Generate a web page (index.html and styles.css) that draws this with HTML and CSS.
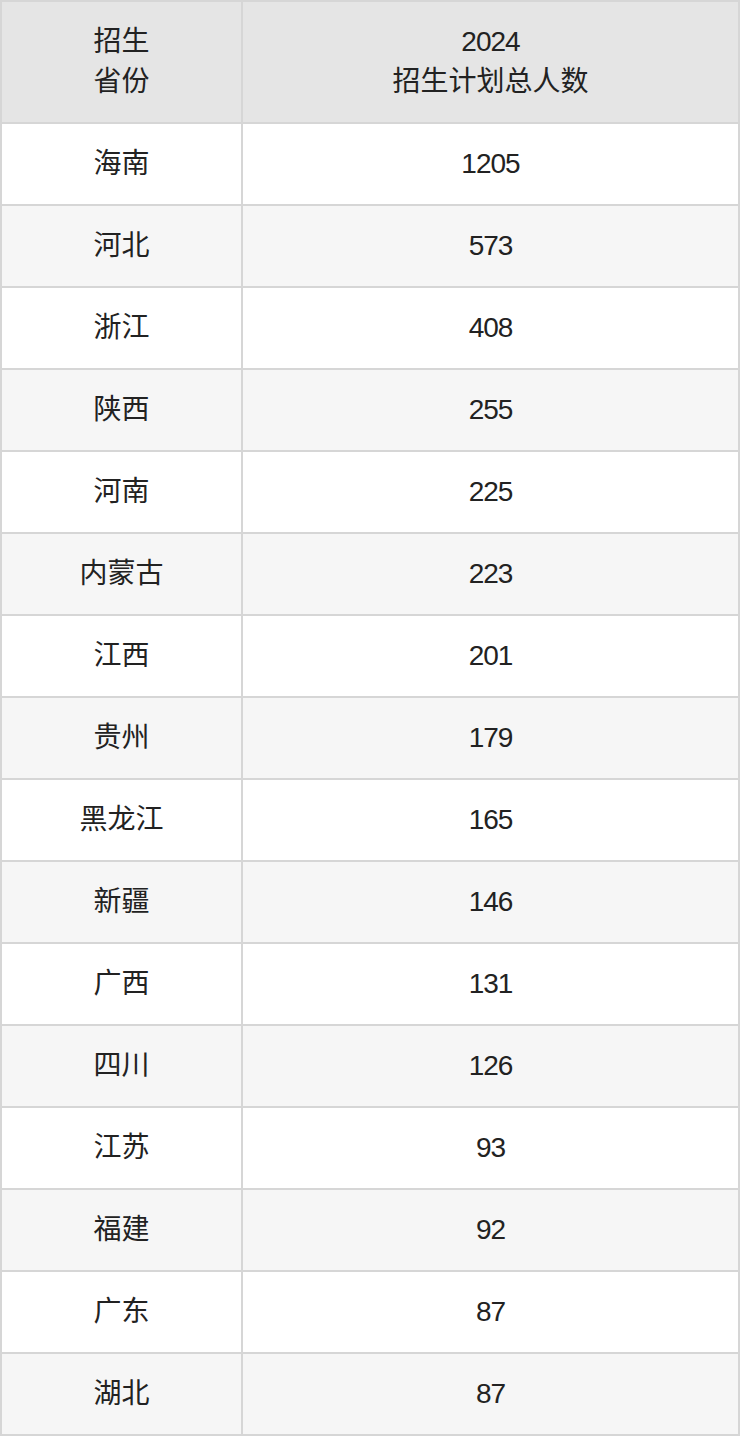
FILE: index.html
```html
<!DOCTYPE html>
<html lang="zh">
<head>
<meta charset="utf-8">
<link rel="stylesheet" href="styles.css">
</head>
<body>
<table class="plan">
<colgroup><col class="c1"><col class="c2"></colgroup>
<thead>
<tr><th>招生<br>省份</th><th><span class="num">2024</span><br>招生计划总人数</th></tr>
</thead>
<tbody>
<tr><td>海南</td><td class="num">1205</td></tr>
<tr><td>河北</td><td class="num">573</td></tr>
<tr><td>浙江</td><td class="num">408</td></tr>
<tr><td>陕西</td><td class="num">255</td></tr>
<tr><td>河南</td><td class="num">225</td></tr>
<tr><td>内蒙古</td><td class="num">223</td></tr>
<tr><td>江西</td><td class="num">201</td></tr>
<tr><td>贵州</td><td class="num">179</td></tr>
<tr><td>黑龙江</td><td class="num">165</td></tr>
<tr><td>新疆</td><td class="num">146</td></tr>
<tr><td>广西</td><td class="num">131</td></tr>
<tr><td>四川</td><td class="num">126</td></tr>
<tr><td>江苏</td><td class="num">93</td></tr>
<tr><td>福建</td><td class="num">92</td></tr>
<tr><td>广东</td><td class="num">87</td></tr>
<tr><td>湖北</td><td class="num">87</td></tr>
</tbody>
</table>
</body>
</html>
```
FILE: styles.css
```css
html, body {
  margin: 0;
  padding: 0;
  background: #ffffff;
}
.plan {
  width: 740px;
  border-collapse: collapse;
  table-layout: fixed;
  font-family: "Liberation Sans", "Noto Sans CJK SC", sans-serif;
  font-size: 28px;
  color: #222222;
}
.plan .c1 { width: 241px; }
.plan th, .plan td {
  border: 2px solid #d6d6d6;
  padding: 0;
  text-align: center;
  vertical-align: middle;
  font-weight: normal;
}
.plan th {
  background: #e5e5e5;
  height: 120px;
  line-height: 40px;
}
.plan td {
  height: 80px;
  line-height: 36px;
}
.plan .num {
  letter-spacing: -1px;
}
.plan tbody tr:nth-child(even) td {
  background: #f6f6f6;
}
```
